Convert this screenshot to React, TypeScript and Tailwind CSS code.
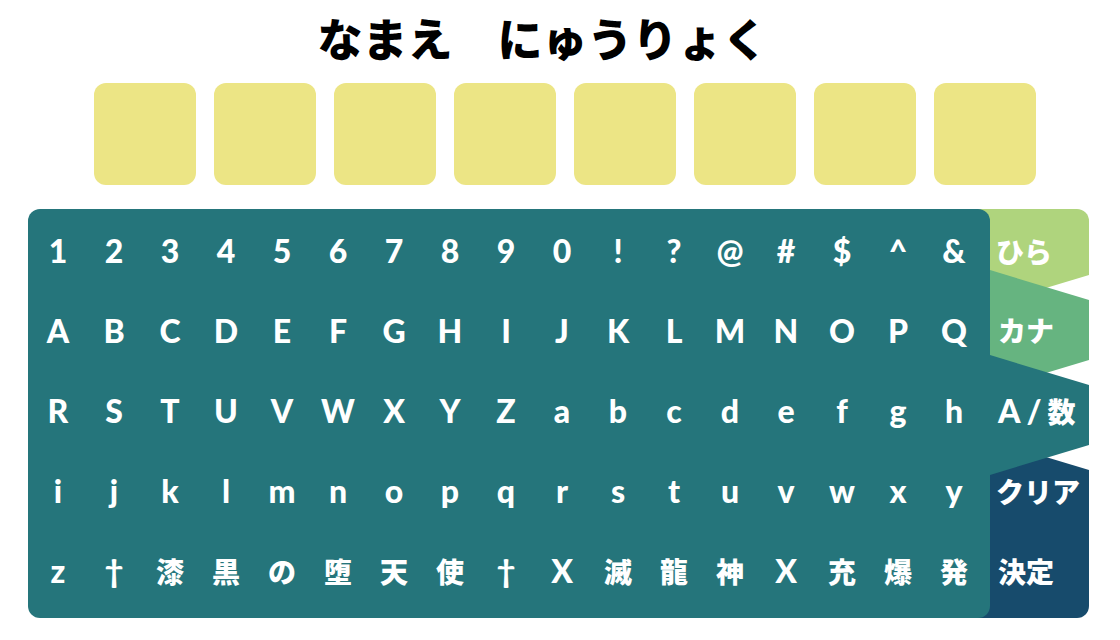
import { useState } from "react";

const SLOTS = 8;

const ROWS = [
  "1234567890!?@#$^&",
  "ABCDEFGHIJKLMNOPQ",
  "RSTUVWXYZabcdefgh",
  "ijklmnopqrstuvwxy",
  "z†漆黒の堕天使†X滅龍神X充爆発",
].map((row) => Array.from(row));

const LATIN = "font-['Lato','Liberation_Sans',sans-serif] text-[32px] font-black";
const KANA = "font-['Noto_Sans_CJK_JP',sans-serif] text-[28px] font-black";

function isJapanese(char: string) {
  return /[\u3040-\u30ff\u4e00-\u9fff]/.test(char);
}

function Key({ char, onPress }: { char: string; onPress: (char: string) => void }) {
  return (
    <button
      type="button"
      onClick={() => onPress(char)}
      className={`flex h-20 cursor-pointer items-center justify-center leading-10 ${isJapanese(char) ? KANA : LATIN}`}
    >
      {char}
    </button>
  );
}

export default function App() {
  const [name, setName] = useState<string[]>([]);
  const press = (char: string) =>
    setName((current) => (current.length < SLOTS ? [...current, char] : current));

  return (
    <main className="min-h-screen bg-white pr-[31px] pl-7">
      <h1 className="mb-[7px] pr-8 text-center font-['Noto_Sans_CJK_JP',sans-serif] text-[45px] leading-[76px] font-black text-black">
        なまえ　にゅうりょく
      </h1>

      <div className="grid grid-cols-8 gap-[18px] pr-[53px] pl-[66px]">
        {Array.from({ length: SLOTS }, (_, i) => (
          <input
            key={i}
            aria-label={`${i + 1}文字目`}
            readOnly
            value={name[i] ?? ""}
            className="aspect-square w-full rounded-xl bg-[#ece585] text-center font-['Lato','Noto_Sans_CJK_JP',sans-serif] text-6xl font-bold text-black outline-none"
          />
        ))}
      </div>

      <div className="mt-6 flex text-white">
        <section className="relative z-10 grid flex-1 grid-cols-17 rounded-xl bg-[#25757b] pt-0.5 pr-2 pb-[7px] pl-0.5">
          {ROWS.map((row, r) =>
            row.map((char, c) => <Key key={`${r}-${c}`} char={char} onPress={press} />),
          )}
        </section>

        <nav className={`-ml-3 flex w-[111px] shrink-0 flex-col overflow-hidden rounded-r-xl leading-10 ${KANA}`}>
          <button
            type="button"
            className="flex h-24 cursor-pointer bg-[#afd47d] pt-[22px] pl-[18px] [clip-path:polygon(0_0,100%_0,100%_66px,12px_96px,0_96px)]"
          >
            ひら
          </button>
          <button
            type="button"
            className="relative z-1 -mt-[35px] flex h-[120px] cursor-pointer items-center bg-[#66b480] pl-[20px] [clip-path:polygon(0_0,12px_0,100%_30px,100%_90px,12px_120px,0_120px)]"
          >
            カナ
          </button>
          <button
            type="button"
            className="relative z-2 -mt-[35px] flex h-[120px] cursor-pointer items-center gap-1.5 bg-[#25757b] pb-2 pl-[20px] [clip-path:polygon(0_0,12px_0,100%_30px,100%_90px,12px_120px,0_120px)]"
          >
            <span className={LATIN}>A</span>
            <span className={LATIN}>/</span>
            <span>数</span>
          </button>
          <button
            type="button"
            onClick={() => setName([])}
            className="-mt-[35px] flex h-[91px] cursor-pointer bg-[#174b6c] pt-[31px] pl-[18px] [clip-path:polygon(0_0,12px_0,100%_30px,100%_100%,0_100%)]"
          >
            クリア
          </button>
          <button type="button" className="flex flex-1 cursor-pointer bg-[#174b6c] pt-5 pl-[20px]">
            決定
          </button>
        </nav>
      </div>
    </main>
  );
}
